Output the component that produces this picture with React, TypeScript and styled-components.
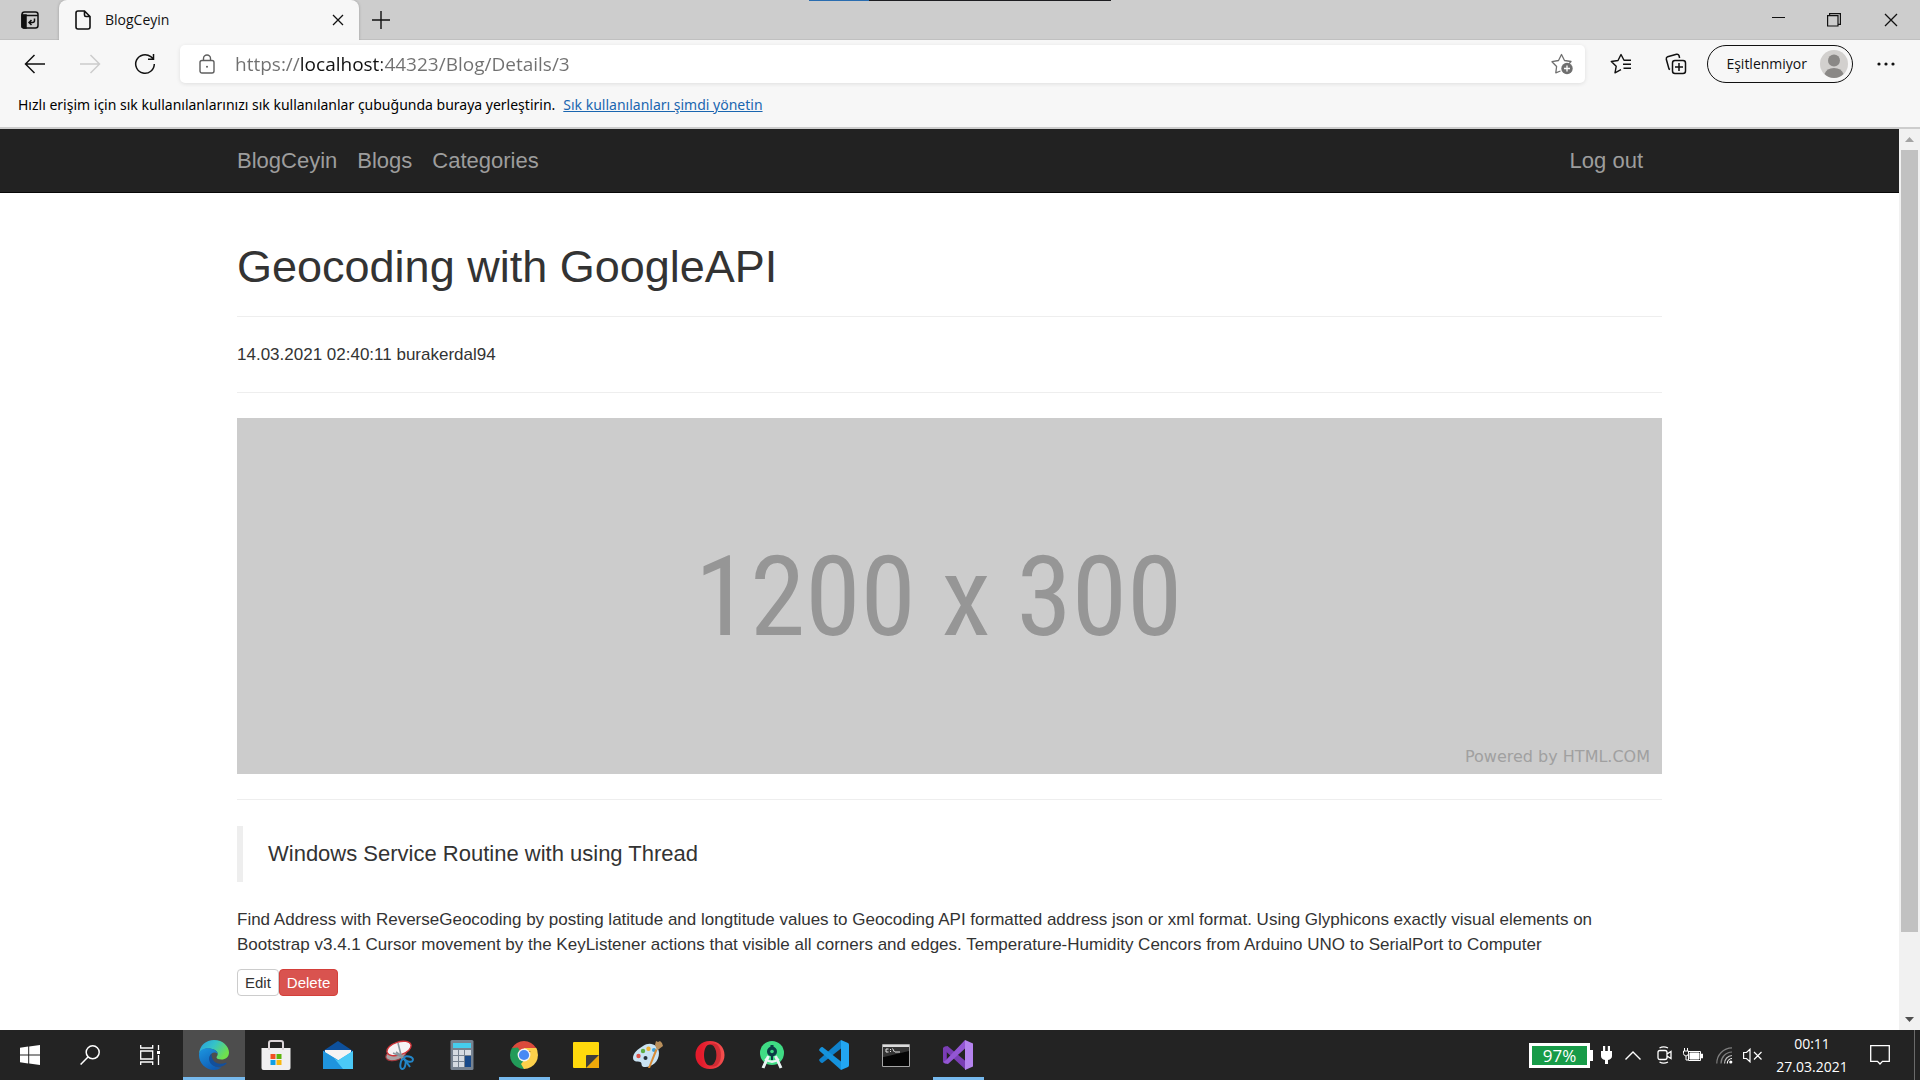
import React from "react";
import styled, { createGlobalStyle, css } from "styled-components";

const UI = `"Open Sans", "Noto Sans", sans-serif`;
const PAGE = `"Liberation Sans", Arial, sans-serif`;

const GlobalStyle = createGlobalStyle`
  *, *::before, *::after { box-sizing: border-box; }
  html, body, #root { height: 100%; }
  body { margin: 0; background: #fff; overflow: hidden; }
  button { font: inherit; color: inherit; border: 0; padding: 0; background: none; cursor: pointer; }
  svg { display: block; flex: none; }
`;

const Desktop = styled.div`
  display: flex;
  flex-direction: column;
  height: 100vh;
  font-family: ${UI};
  position: relative;
`;

/* ---------- Browser chrome ---------- */

const TopStrip = styled.div`
  position: absolute;
  top: 0;
  left: 50%;
  width: 302px;
  height: 1px;
  margin-left: -151px;
  background: linear-gradient(90deg, #2a6db0 60px, #1d1d20 60px);
`;

const TabStrip = styled.header`
  display: flex;
  align-items: stretch;
  height: 40px;
  flex: none;
  background: #cdcdcd;
  border-bottom: 1px solid #c0c0c0;
`;

const IconButton = styled.button<{ $w: number }>`
  width: ${(p) => p.$w}px;
  flex: none;
  display: flex;
  align-items: center;
  justify-content: center;
`;

const Tab = styled.div`
  display: flex;
  align-items: center;
  width: 300px;
  height: 40px;
  padding: 0 9px 0 16px;
  gap: 14px;
  background: #f7f7f7;
  border-radius: 8px 8px 0 0;
  font-size: 14px;
  color: #111;
  box-shadow: 0 0 3px rgba(0, 0, 0, 0.25);
  clip-path: inset(0 -4px 0 -4px);
`;

const TabTitle = styled.span`
  flex: 1;
  padding-bottom: 2px;
`;

const Spacer = styled.div`
  flex: 1;
`;

const Toolbar = styled.div`
  display: flex;
  align-items: center;
  flex: none;
  height: 47px;
  padding: 0 10px 0 7px;
  background: #f7f7f7;
`;

const AddressBar = styled.label`
  display: flex;
  align-items: center;
  flex: 1;
  height: 38px;
  margin: 0 8px;
  padding: 0 12px 0 19px;
  gap: 20px;
  background: #fff;
  border-radius: 5px;
  box-shadow: 0 1px 4px rgba(0, 0, 0, 0.1);
`;

const UrlInput = styled.input`
  flex: 1;
  min-width: 0;
  border: 0;
  outline: 0;
  padding: 0;
  height: 28px;
  font-family: ${UI};
  font-size: 19px;
  color: transparent;
  background: linear-gradient(90deg, #707070 65px, #111 65px, #111 147px, #707070 147px);
  -webkit-background-clip: text;
  background-clip: text;
`;

const Profile = styled.button`
  display: flex;
  align-items: center;
  gap: 13px;
  height: 38px;
  margin: 0 9px 0 4px;
  padding: 0 4px 0 18px;
  border: 1px solid #111;
  border-radius: 19px;
  font-size: 14px;
  color: #111;
  white-space: nowrap;
`;

const FavBar = styled.div`
  display: flex;
  align-items: center;
  gap: 8px;
  flex: none;
  height: 42px;
  padding: 0 18px 6px;
  background: #f7f7f7;
  border-bottom: 2px solid #cdcdcd;
  font-family: "Noto Sans", "Open Sans", sans-serif;
  font-size: 14px;
  color: #000;
  white-space: nowrap;
`;

const FavLink = styled.a`
  color: #1a66b0;
`;

/* ---------- Page ---------- */

const Viewport = styled.div`
  display: flex;
  flex: 1;
  min-height: 0;
`;

const Page = styled.div`
  flex: 1;
  min-width: 0;
  overflow: hidden;
  font-family: ${PAGE};
  font-size: 17px;
  line-height: 25px;
  color: #333;
  background: #fff;
`;

const Container = styled.div`
  max-width: 1463px;
  margin: 0 auto;
  padding: 0 19px;
`;

const NavBar = styled.nav`
  background: #222;
  border-bottom: 1px solid #080808;
`;

const NavInner = styled(Container)`
  display: flex;
  align-items: center;
  gap: 20px;
  height: 63px;
  padding-right: 38px;
`;

const NavLink = styled.a`
  color: #9d9d9d;
  font-size: 22px;
  text-decoration: none;
`;

const Title = styled.h1`
  margin: 49px 0 24px;
  font-size: 45px;
  line-height: 50px;
  font-weight: 400;
`;

const Rule = styled.hr`
  height: 1px;
  margin: 25px 0;
  border: 0;
  background: #eee;

  ${Title} + & {
    margin-top: 24px;
  }
`;

const Text = styled.p`
  margin: 0 0 12px;
`;

const Banner = styled.div`
  display: flex;
  flex-direction: column;
  justify-content: flex-end;
  align-items: stretch;
  aspect-ratio: 1200 / 300;
  padding: 0 12px 6px;
  background: #ccc;
`;

const BannerSize = styled.div`
  flex: 1;
  display: flex;
  align-items: center;
  justify-content: center;
  padding: 30px 22px 0 0;
  font-family: "Liberation Sans Narrow", "Roboto Condensed", "Open Sans Condensed", "DejaVu Sans Condensed", sans-serif;
  font-size: 112px;
  line-height: 120px;
  color: #969696;
`;

const BannerCredit = styled.div`
  text-align: right;
  font-family: "DejaVu Sans", sans-serif;
  font-size: 16px;
  line-height: 22px;
  color: #a0a0a0;
`;

const Quote = styled.blockquote`
  margin: 26px 0 25px;
  padding: 12px 25px;
  border-left: 6px solid #eee;
  font-size: 22px;
  line-height: 32px;
`;

const Actions = styled.div`
  display: flex;
`;

const ActionButton = styled.button<{ $danger?: boolean }>`
  height: 27px;
  padding: 0 7px;
  border: 1px solid #ccc;
  border-radius: 4px;
  font-size: 15px;
  line-height: 22px;
  background: #fff;
  color: #333;
  ${(p) =>
    p.$danger &&
    css`
      border-color: #d43f3a;
      background: #d9534f;
      color: #fff;
    `}
`;

const ScrollBar = styled.div`
  display: flex;
  flex-direction: column;
  align-items: center;
  width: 21px;
  flex: none;
  background: #f1f1f1;
`;

const ScrollArrow = styled.button`
  display: flex;
  align-items: center;
  justify-content: center;
  width: 21px;
  height: 21px;
`;

const ScrollTrack = styled.div`
  flex: 1;
  width: 17px;
`;

const ScrollThumb = styled.div`
  height: 91%;
  background: #c1c1c1;
`;

/* ---------- Taskbar ---------- */

const Taskbar = styled.footer`
  display: flex;
  align-items: stretch;
  height: 50px;
  flex: none;
  background: #232323;
  color: #fff;
`;

const SystemButton = styled.button`
  display: flex;
  align-items: center;
  justify-content: center;
  width: 60px;
`;

const Apps = styled.div`
  display: flex;
  margin-left: 3px;
`;

const AppButton = styled.button<{ $active?: boolean; $running?: boolean }>`
  display: flex;
  align-items: center;
  justify-content: center;
  width: 62px;
  background: ${(p) => (p.$active ? "#4d4d4d" : "none")};
  ${(p) =>
    p.$active &&
    css`
      box-shadow: inset 0 -3px #76b9ed;
    `}
  ${(p) =>
    p.$running &&
    css`
      background: linear-gradient(#76b9ed, #76b9ed) center bottom / 51px 3px no-repeat;
    `}
`;

const Tray = styled.div`
  display: flex;
  align-items: center;
  margin-left: auto;
  padding-right: 10px;
`;

const TrayButton = styled.button<{ $w: number }>`
  display: flex;
  align-items: center;
  justify-content: center;
  width: ${(p) => p.$w}px;
  height: 50px;
`;

const BatteryMeter = styled.div`
  display: flex;
  align-items: center;
  margin-right: 6px;
  &::after {
    content: "";
    width: 3px;
    height: 11px;
    background: #fff;
  }
`;

const BatteryLevel = styled.span`
  width: 61px;
  border: 3px solid #fff;
  background: #179b48;
  font-size: 17px;
  line-height: 19px;
  text-align: center;
`;

const Clock = styled.button`
  width: 88px;
  font-size: 14px;
  line-height: 23px;
  text-align: center;
`;

const ShowDesktop = styled.button`
  width: 6px;
  border-left: 1px solid #6a6a6a;
`;

/* ---------- Icons ---------- */

const Line = ({ w, h, children, sw = 1.4, color = "#111" }: any) => (
  <svg width={w} height={h} viewBox={`0 0 ${w} ${h}`} fill="none" stroke={color} strokeWidth={sw} aria-hidden>
    {children}
  </svg>
);

const TabActionsIcon = () => (
  <Line w={18} h={18} sw={1.5}>
    <rect x="1" y="1" width="16" height="16" rx="2.5" />
    <path d="M1 4.500h16" />
    <path d="M1 4h4v13H2.500L1 16z" fill="#111" />
    <path d="M13.500 7.500v2q0 2-2 2H8.500M10.500 9l-2.500 2.500 2.500 2.500" />
  </Line>
);
const DocIcon = () => (
  <Line w={16} h={20} sw={1.6}>
    <path d="M3 1h6.500L15 6.500V17q0 2-2 2H3q-2 0-2-2V3q0-2 2-2zM9.500 1v4q0 1.500 1.500 1.500h4" />
  </Line>
);
const CrossIcon = ({ s = 12 }: { s?: number }) => (
  <Line w={s} h={s} sw={1.3}>
    <path d={`M1 1L${s - 1} ${s - 1}M${s - 1} 1L1 ${s - 1}`} />
  </Line>
);
const PlusIcon = () => (
  <Line w={18} h={18}>
    <path d="M9 0v18M0 9h18" />
  </Line>
);
const MinimizeIcon = () => (
  <Line w={13} h={13} sw={1}>
    <path d="M0 4.500h13" />
  </Line>
);
const RestoreIcon = () => (
  <Line w={14} h={14} sw={1.2}>
    <path d="M.6 2.600h10.400v10.400H.6zM2.600 2.600V.6h10.800v10.800H11" />
  </Line>
);
const BackIcon = ({ forward = false }: { forward?: boolean }) => (
  <Line w={22} h={20} sw={1.5} color={forward ? "#ccc" : "#111"}>
    <path d={forward ? "M1 10h19.500M11.500 1l9 9-9 9" : "M21 10H1.500M10.500 1l-9 9 9 9"} />
  </Line>
);
const ReloadIcon = () => (
  <Line w={22} h={22} sw={1.5}>
    <path d="M20.300 11a9.300 9.300 0 1 1-3.500-7.300l2.200 1.800M19.500 1v5.300h-5.500" />
  </Line>
);
const LockIcon = () => (
  <Line w={16} h={20} sw={1.4} color="#5f5f5f">
    <rect x="1" y="6.500" width="14" height="12.500" rx="2" />
    <path d="M4.500 6.500V4.500a3.500 3.500 0 0 1 7 0v2" />
    <circle cx="8" cy="12.700" r="1" fill="#5f5f5f" stroke="none" />
  </Line>
);
const StarAddIcon = () => (
  <Line w={22} h={22} sw={1.3} color="#6f6f6f">
    <path d="M9.500 18l-4.700 1.800 .8-6.300L1 8.700l6.500-1.200L10.500 1.500l3 6 6.500 1-2 2.200" strokeLinejoin="round" />
    <circle cx="16" cy="15.500" r="5.700" fill="#6f6f6f" stroke="none" />
    <path d="M16 12.500v6M13 15.500h6" stroke="#fff" />
  </Line>
);
const FavoritesIcon = () => (
  <Line w={22} h={22}>
    <path d="M21 7.300h-7L11 1.500 8 7.500 1.300 8.500l4.900 4.800-1.200 6.500 5-2.600 1-.5M13 11.300h8M13.500 15.300h7.500" strokeLinejoin="round" />
  </Line>
);
const CollectionsIcon = () => (
  <Line w={22} h={22} sw={1.5}>
    <rect x="7.500" y="7.500" width="13" height="13" rx="2.500" />
    <path d="M14 10v8M10 14h8M5 16.500l-1-.5L1.300 6.300q-.3-2 1.300-2.500L11.500 1.300q2-.3 2.500 1.200l.6 2.500" />
  </Line>
);
const AvatarIcon = () => (
  <svg width="28" height="28" viewBox="0 0 28 28" aria-hidden>
    <circle cx="14" cy="14" r="14" fill="#d2d0ce" />
    <circle cx="14" cy="10.500" r="6" fill="#8a8886" />
    <path d="M4.500 24q2-6 9.500-6t9.500 6q-4 4-9.500 4t-9.500-4z" fill="#8a8886" />
  </svg>
);
const DotsIcon = () => (
  <svg width="18" height="4" viewBox="0 0 18 4" fill="#111" aria-hidden>
    <circle cx="2" cy="2" r="1.600" />
    <circle cx="9" cy="2" r="1.600" />
    <circle cx="16" cy="2" r="1.600" />
  </svg>
);
const Triangle = ({ down = false }: { down?: boolean }) => (
  <svg width="9" height="5" viewBox="0 0 9 5" aria-hidden>
    <path d={down ? "M0 0h9L4.500 5z" : "M0 5h9L4.500 0z"} fill={down ? "#505050" : "#a3a3a3"} />
  </svg>
);

const WindowsIcon = () => (
  <svg width="20" height="20" viewBox="0 0 20 20" fill="#fff" aria-hidden>
    <path d="M0 2.800L8.200 1.600v8H0zM9.200 1.500L20 0v9.600H9.200zM0 10.500h8.200v8L0 17.300zM9.200 10.500H20V20L9.200 18.600z" />
  </svg>
);
const SearchIcon = () => (
  <Line w={20} h={20} color="#fff" sw={1.5}>
    <circle cx="12.700" cy="7.300" r="6.500" />
    <path d="M8 12L.6 19.500" />
  </Line>
);
const TaskViewIcon = () => (
  <Line w={20} h={20} color="#fff" sw={1.3}>
    <path d="M.7 0v3h12V0M.7 20v-3h12v3M.7 6h12v8H.7zM18.500 0v5M18.500 10v10" />
    <path d="M17 6h3v3h-3z" fill="#fff" stroke="none" />
  </Line>
);
const EdgeIcon = () => (
  <svg width="30" height="30" viewBox="0 0 30 30" aria-hidden>
    <defs>
      <linearGradient id="eg" x1="0" y1="0" x2="1" y2=".5">
        <stop offset="0" stopColor="#279be0" />
        <stop offset=".5" stopColor="#35c3c8" />
        <stop offset="1" stopColor="#6fe04c" />
      </linearGradient>
      <linearGradient id="eb" x1="0" y1="0" x2=".6" y2="1">
        <stop offset="0" stopColor="#1c96e0" />
        <stop offset="1" stopColor="#0f5cb4" />
      </linearGradient>
    </defs>
    <path d="M0 14C.5 5.500 7 0 15 0c9 0 15 6.500 15 12.500 0 4.500-3.500 7-7.500 7-3 0-5-1-5-2.300 0-.8 1.200-1.300 1.200-3.200C18.700 10 13 8.500 9 8.500 4.500 8.500 1 11 0 14z" fill="url(#eg)" />
    <path d="M0 15c0-4 4-6.700 8.500-6.700 5.500 0 10 2.400 10.200 5.700-1.500-1.700-4.200-2-6-.5-3 2.500-2.700 7.500.3 10.500 2.500 2.500 6 4 9.500 3.500C20 29.200 17.500 30 15 30 6.500 30 0 23 0 15z" fill="url(#eb)" />
    <path d="M12.500 13.700c-3.500 3-3 8.300.5 11 4.500 3.500 11 2.500 14.500-1.200.4-.6 0-1-.7-.7-6 2.500-14.500.5-14.300-9.100z" fill="#124f9c" />
  </svg>
);
const StoreIcon = () => (
  <svg width="30" height="30" viewBox="0 0 30 30" aria-hidden>
    <path d="M8 9V3q0-2 2-2h10q2 0 2 2v6" fill="none" stroke="#ddd6d9" strokeWidth="2" />
    <path d="M.5 8h29v20q0 2-2 2h-25q-2 0-2-2z" fill="#f0eff0" />
    <path d="M7 7h2v3H7zM21 7h2v3h-2z" fill="#ddd6d9" />
    <path d="M9.500 14h5v5h-5z" fill="#f25022" />
    <path d="M15.500 14h5v5h-5z" fill="#5cb40c" />
    <path d="M9.500 20h5v5h-5z" fill="#0f9fe6" />
    <path d="M15.500 20h5v5h-5z" fill="#f8b70c" />
  </svg>
);
const MailIcon = () => (
  <svg width="30" height="28" viewBox="0 0 30 28" aria-hidden>
    <path d="M0 10L15 0l15 10v4H0z" fill="#0d509c" />
    <path d="M2 9h26v10H2z" fill="#f5f3f3" />
    <path d="M0 10l15 9.500L30 10v18H0z" fill="#29b0ed" />
    <path d="M0 10l30 18H0z" fill="#1f94dd" />
    <path d="M30 10v18H20L11 17l4 2.500z" fill="#4bc9f6" />
    <path d="M2.500 10h25L15 18z" fill="#f5f3f3" />
  </svg>
);
const SnipIcon = () => (
  <svg width="30" height="30" viewBox="0 0 30 30" fill="none" aria-hidden>
    <ellipse cx="11" cy="14.500" rx="10.500" ry="5.500" fill="#a9a3a5" stroke="#a9353a" transform="rotate(-18 11 14.500)" />
    <ellipse cx="14" cy="8.500" rx="12.500" ry="6.500" fill="#f5f3f4" stroke="#cf3439" strokeWidth="1.400" transform="rotate(-18 14 8.500)" />
    <path d="M13 3l4 16M8 13l12 5M11 12l7 5" stroke="#89959d" strokeWidth="1.600" />
    <ellipse cx="23.500" cy="19" rx="4.500" ry="2.500" stroke="#2386c8" strokeWidth="2" transform="rotate(15 23.500 19)" />
    <ellipse cx="18" cy="24" rx="2.500" ry="5" stroke="#2386c8" strokeWidth="2" transform="rotate(10 18 24)" />
    <path d="M20 20l5 7" stroke="#2386c8" strokeWidth="2" />
  </svg>
);
const CalculatorIcon = () => (
  <svg width="24" height="30" viewBox="0 0 24 30" aria-hidden>
    <rect width="23" height="30" x=".5" rx="1.500" fill="#768290" />
    <path d="M3 3h18v5H3z" fill="#45cdee" />
    <path d="M3 10h5v5H3zM9 10h5v5H9zM15 10h6v5h-6zM3 16h5v5H3zM9 16h5v5H9zM3 22h5v5H3zM9 22h5v5H9z" fill="#d5dbe2" />
    <path d="M15 16h6v11h-6z" fill="#17498a" />
  </svg>
);
const ChromeIcon = () => (
  <svg width="28" height="28" viewBox="0 0 28 28" aria-hidden>
    <path d="M14 14L1.900 7A14 14 0 0 1 26.100 7z" fill="#db4a3c" />
    <path d="M14 14l12.100-7A14 14 0 0 1 14 28z" fill="#fcd04b" />
    <path d="M14 14v14A14 14 0 0 1 1.900 7z" fill="#229b59" />
    <path d="M14 7h12.100a14 14 0 0 1 1.200 3H14z" fill="#fcd04b" />
    <path d="M14 7h12.100L26 6.800 14 6z" fill="#db4a3c" />
    <path d="M8 17.500L1.900 7l6-.5 3 5z" fill="#229b59" />
    <path d="M20 17.500L14 28l-3-5 4-5z" fill="#fcd04b" />
    <circle cx="14" cy="14" r="6.400" fill="#f3f3f3" />
    <circle cx="14" cy="14" r="5.100" fill="#4889f4" />
  </svg>
);
const NotesIcon = () => (
  <svg width="26" height="26" viewBox="0 0 26 26" aria-hidden>
    <rect width="26" height="26" rx="1" fill="#ffd90c" />
    <path d="M13 26L26 13v13z" fill="#f0a90a" />
    <path d="M13 26V14q0-1 1-1h12z" fill="#3f3d3b" />
  </svg>
);
const PaintIcon = () => (
  <svg width="30" height="28" viewBox="0 0 30 28" aria-hidden>
    <path d="M10 5C17 0 26 4 26 12c0 9-8 15-15 14-3-.5-2-3-3-4.500S0 22 0 17C0 12 5 8 10 5z" fill="#c9e3f3" />
    <circle cx="5.500" cy="15" r="2.200" fill="#dd5147" />
    <circle cx="10" cy="10" r="2.200" fill="#5fae43" />
    <circle cx="15.500" cy="7.800" r="2.200" fill="#edb035" />
    <circle cx="21" cy="9" r="2" fill="#3aa0d9" />
    <circle cx="12.500" cy="17" r="2" fill="#28323a" />
    <path d="M15 27L22.500 8l2 .7L17 27z" fill="#d88a35" />
    <path d="M22 4l1-4 2 1 2-1 2 2 1 3-4 3-2 1z" fill="#b98f5b" />
  </svg>
);
const OperaIcon = () => (
  <svg width="30" height="28" viewBox="0 0 30 28" aria-hidden>
    <defs>
      <linearGradient id="op" x1="0" x2="1">
        <stop offset=".2" stopColor="#e31b2c" />
        <stop offset="1" stopColor="#f4514f" />
      </linearGradient>
    </defs>
    <path fillRule="evenodd" d="M15 0c8.500 0 14.500 6 14.500 14S23.500 28 15 28 .5 22 .5 14 6.500 0 15 0zm0 3.500c-4 0-6 5-6 10.500s2 10.500 6 10.500S21.500 19.500 21.500 14 19 3.500 15 3.500z" fill="url(#op)" />
    <path d="M15 3.500c4 0 6.500 5 6.500 10.500S19 24.500 15 24.500q3 2 7 0c3-3 4-6.500 4-10.500s-1-7.500-4-10.500q-4-2-7 0z" fill="#a5121f" opacity=".4" />
  </svg>
);
const AndroidStudioIcon = () => (
  <svg width="26" height="28" viewBox="0 0 26 28" aria-hidden>
    <circle cx="13" cy="12" r="12" fill="#3fdb84" />
    <path d="M9.500 15L4 27M16.500 15L22 27" stroke="#eaf3f3" strokeWidth="3" />
    <path d="M6 18q7 5.500 14 0" stroke="#eaf3f3" strokeWidth="2.200" fill="none" />
    <circle cx="13" cy="10.500" r="5" fill="#0b3b45" />
    <path d="M11.500 4h3v4h-3z" fill="#0b3b45" />
    <circle cx="13" cy="10.500" r="1.800" fill="#3fdb84" />
    <path d="M12 15h2v4h-2z" fill="#0b3b45" />
  </svg>
);
const VSCodeIcon = () => (
  <svg width="30" height="30" viewBox="0 0 30 30" aria-hidden>
    <path d="M22 0l7 3q1 .5 1 2v20q0 1.500-1 2l-7 3z" fill="#22a6f2" />
    <path d="M22 0v8.500L3.500 23 2 22.800.5 21q-.8-1 .2-2z" fill="#0f82cc" />
    <path d="M22 30v-8.500L3.500 7 2 7.200.5 9q-.8 1 .2 2z" fill="#1593dd" />
  </svg>
);
const TerminalIcon = () => (
  <svg width="28" height="23" viewBox="0 0 28 23" aria-hidden>
    <path d="M.5.500h27v22H.5z" fill="#050505" stroke="#a5a5a5" />
    <path d="M1 1h26v2H1z" fill="#dcdcdc" />
    <path d="M1 3h26v4L2 13H1z" fill="#343434" />
    <path d="M6.500 5H4v3h2.500M8.500 5v1M8.500 7v1M10.500 4.500l2 3.500M13 8h5" stroke="#e4e4e4" fill="none" />
  </svg>
);
const VisualStudioIcon = () => (
  <svg width="30" height="30" viewBox="0 0 30 30" aria-hidden>
    <path d="M2 6.500L0 8v14l2 1.500L4 22V8z" fill="#6a2fa0" />
    <path d="M2 6.500L4.500 6 23 21.500V30L3 11.500V20L0 22V8z" fill="#7a3eb5" />
    <path d="M22 0v8.500L5 24l-3-.5L0 22l3-2z" fill="#9356d3" />
    <path d="M22 0l8 3.500v23L22 30z" fill="#b583ee" />
  </svg>
);
const PlugIcon = () => (
  <svg width="11" height="18" viewBox="0 0 11 18" fill="#fff" aria-hidden>
    <path d="M2 0h2.200v5h2.600V0H9v5h2v5q0 3-4 4v4H4v-4q-4-1-4-4V5h2z" />
  </svg>
);
const ChevronIcon = () => (
  <Line w={16} h={9} color="#fff" sw={1.4}>
    <path d="M.5 8.500L8 1l7.500 7.500" />
  </Line>
);
const MeetIcon = () => (
  <Line w={15} h={18} color="#fff" sw={1.3}>
    <path d="M3 4.500h5q2 0 2 2v5q0 2-2 2H3q-2 0-2-2v-5q0-2 2-2zM10 8l4-2.500v7L10 10M2.500 2Q6.500-.3 11 2M2.500 16q4 2.300 8.500 0" />
  </Line>
);
const BatteryIcon = () => (
  <svg width="20" height="14" viewBox="0 0 20 14" aria-hidden>
    <path d="M5.500 3.500h12v9h-12z" fill="none" stroke="#fff" />
    <path d="M7 5h9v6H7z" fill="#fff" stroke="#fff" />
    <path d="M18.500 6v4h1V6z" stroke="#fff" fill="#fff" />
    <path d="M1.500 0v3M4.500 0v3" stroke="#fff" />
    <path d="M.5 3h5v2.500Q5.500 7.500 3 8 .5 7.500.5 5.500zM3 8v4h2" stroke="#fff" fill="#232323" />
  </svg>
);
const WifiIcon = () => (
  <svg width="17" height="17" viewBox="0 0 17 17" fill="none" aria-hidden>
    <path d="M.8 16.500A15.500 15.500 0 0 1 16 .8M5 16.500A11.300 11.300 0 0 1 16 5" stroke="#808080" strokeWidth="1.200" />
    <path d="M8.500 16.500A8 8 0 0 1 16 8.500" stroke="#bbb" strokeWidth="1.200" />
    <path d="M11.300 16.500A5 5 0 0 1 16 11.500" stroke="#fff" strokeWidth="1.200" />
    <circle cx="14.800" cy="15" r="1.600" fill="#fff" />
  </svg>
);
const MuteIcon = () => (
  <Line w={20} h={15} color="#fff" sw={1.2}>
    <path d="M.6 4.500h2.900L7 1.200v12.600L3.500 10.500H.6zM11 4l7.500 7.500M18.500 4L11 11.500" />
  </Line>
);
const NotificationIcon = () => (
  <Line w={20} h={20} color="#fff" sw={1.3}>
    <path d="M.7.700h18.600v15.600H12.500L10 19l-2.500-2.700H.7z" />
  </Line>
);

const apps = [
  { name: "Microsoft Edge", icon: <EdgeIcon />, active: true },
  { name: "Microsoft Store", icon: <StoreIcon /> },
  { name: "Mail", icon: <MailIcon /> },
  { name: "Snipping Tool", icon: <SnipIcon /> },
  { name: "Calculator", icon: <CalculatorIcon /> },
  { name: "Google Chrome", icon: <ChromeIcon />, running: true },
  { name: "Sticky Notes", icon: <NotesIcon /> },
  { name: "Paint", icon: <PaintIcon /> },
  { name: "Opera", icon: <OperaIcon /> },
  { name: "Android Studio", icon: <AndroidStudioIcon /> },
  { name: "Visual Studio Code", icon: <VSCodeIcon /> },
  { name: "Command Prompt", icon: <TerminalIcon /> },
  { name: "Visual Studio", icon: <VisualStudioIcon />, running: true },
];

export default function App() {
  return (
    <Desktop>
      <GlobalStyle />
      <TabStrip>
        <IconButton $w={59} aria-label="Tab actions"><TabActionsIcon /></IconButton>
        <Tab>
          <DocIcon />
          <TabTitle>BlogCeyin</TabTitle>
          <IconButton $w={24} aria-label="Close tab"><CrossIcon /></IconButton>
        </Tab>
        <IconButton $w={44} aria-label="New tab"><PlusIcon /></IconButton>
        <Spacer />
        <IconButton $w={56} aria-label="Minimize"><MinimizeIcon /></IconButton>
        <IconButton $w={56} aria-label="Restore"><RestoreIcon /></IconButton>
        <IconButton $w={58} aria-label="Close"><CrossIcon s={14} /></IconButton>
      </TabStrip>
      <TopStrip />
      <Toolbar>
        <IconButton $w={55} aria-label="Back"><BackIcon /></IconButton>
        <IconButton $w={55} aria-label="Forward" disabled><BackIcon forward /></IconButton>
        <IconButton $w={55} aria-label="Reload"><ReloadIcon /></IconButton>
        <AddressBar>
          <LockIcon />
          <UrlInput aria-label="Address" defaultValue="https://localhost:44323/Blog/Details/3" spellCheck={false} />
          <StarAddIcon />
        </AddressBar>
        <IconButton $w={55} aria-label="Favorites"><FavoritesIcon /></IconButton>
        <IconButton $w={55} aria-label="Collections"><CollectionsIcon /></IconButton>
        <Profile>Eşitlenmiyor<AvatarIcon /></Profile>
        <IconButton $w={48} aria-label="Settings"><DotsIcon /></IconButton>
      </Toolbar>
      <FavBar>
        <span>Hızlı erişim için sık kullanılanlarınızı sık kullanılanlar çubuğunda buraya yerleştirin.</span>
        <FavLink href="#">Sık kullanılanları şimdi yönetin</FavLink>
      </FavBar>

      <Viewport>
        <Page>
          <NavBar>
            <NavInner>
              <NavLink href="#">BlogCeyin</NavLink>
              <NavLink href="#">Blogs</NavLink>
              <NavLink href="#">Categories</NavLink>
              <Spacer />
              <NavLink href="#">Log out</NavLink>
            </NavInner>
          </NavBar>
          <Container as="main">
            <Title>Geocoding with GoogleAPI</Title>
            <Rule />
            <Text>14.03.2021 02:40:11 burakerdal94</Text>
            <Rule />
            <Banner>
              <BannerSize>1200 x 300</BannerSize>
              <BannerCredit>Powered by HTML.COM</BannerCredit>
            </Banner>
            <Rule />
            <Quote>Windows Service Routine with using Thread</Quote>
            <Text>
              Find Address with ReverseGeocoding by posting latitude and longtitude values to Geocoding API formatted
              address json or xml format. Using Glyphicons exactly visual elements on Bootstrap v3.4.1 Cursor movement
              by the KeyListener actions that visible all corners and edges. Temperature-Humidity Cencors from Arduino
              UNO to SerialPort to Computer
            </Text>
            <Actions>
              <ActionButton>Edit</ActionButton>
              <ActionButton $danger>Delete</ActionButton>
            </Actions>
          </Container>
        </Page>
        <ScrollBar>
          <ScrollArrow aria-label="Scroll up"><Triangle /></ScrollArrow>
          <ScrollTrack><ScrollThumb /></ScrollTrack>
          <ScrollArrow aria-label="Scroll down"><Triangle down /></ScrollArrow>
        </ScrollBar>
      </Viewport>

      <Taskbar>
        <SystemButton aria-label="Start"><WindowsIcon /></SystemButton>
        <SystemButton aria-label="Search"><SearchIcon /></SystemButton>
        <SystemButton aria-label="Task view"><TaskViewIcon /></SystemButton>
        <Apps>
          {apps.map((a) => (
            <AppButton key={a.name} aria-label={a.name} $active={a.active} $running={a.running}>{a.icon}</AppButton>
          ))}
        </Apps>
        <Tray>
          <BatteryMeter><BatteryLevel>97%</BatteryLevel></BatteryMeter>
          <TrayButton $w={15} aria-label="Plugged in"><PlugIcon /></TrayButton>
          <TrayButton $w={38} aria-label="Hidden icons"><ChevronIcon /></TrayButton>
          <TrayButton $w={24} aria-label="Meet now"><MeetIcon /></TrayButton>
          <TrayButton $w={34} aria-label="Battery"><BatteryIcon /></TrayButton>
          <TrayButton $w={28} aria-label="Network"><WifiIcon /></TrayButton>
          <TrayButton $w={30} aria-label="Volume"><MuteIcon /></TrayButton>
          <Clock>00:11<br />27.03.2021</Clock>
          <TrayButton $w={48} aria-label="Notifications"><NotificationIcon /></TrayButton>
        </Tray>
        <ShowDesktop aria-label="Show desktop" />
      </Taskbar>
    </Desktop>
  );
}
